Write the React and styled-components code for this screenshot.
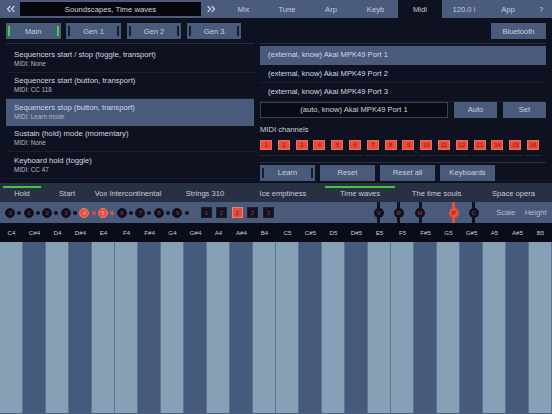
import React from 'react';
import styled, { createGlobalStyle } from 'styled-components';

const GlobalStyle = createGlobalStyle`
  html, body {
    margin: 0;
    padding: 0;
    background: #0e1220;
  }
  body {
    font-family: "Liberation Sans", Arial, sans-serif;
  }
  * {
    box-sizing: border-box;
  }
`;

const TABS = [
  { label: 'Mix', w: 43 },
  { label: 'Tune', w: 44 },
  { label: 'Arp', w: 44 },
  { label: 'Keyb', w: 45 },
  { label: 'Midi', w: 44, active: true },
  { label: '120.0 i', w: 44 },
  { label: 'App', w: 44 },
  { label: '?', w: 22 },
];

const CONTROLS = [
  { title: 'Sequencers start / stop (toggle, transport)', midi: 'MIDI: None' },
  { title: 'Sequencers start (button, transport)', midi: 'MIDI: CC 118' },
  { title: 'Sequencers stop (button, transport)', midi: 'MIDI: Learn mode', selected: true },
  { title: 'Sustain (hold) mode (momentary)', midi: 'MIDI: None' },
  { title: 'Keyboard hold (toggle)', midi: 'MIDI: CC 47' },
];

const PORTS = [
  { name: '(external, know) Akai MPK49 Port 1', selected: true },
  { name: '(external, know) Akai MPK49 Port 2' },
  { name: '(external, know) Akai MPK49 Port 3' },
];

const PRESETS = [
  { label: 'Hold', w: 44, active: true },
  { label: 'Start', w: 46 },
  { label: 'Vox Intercontinental', w: 76 },
  { label: 'Strings 310', w: 78 },
  { label: 'Ice emptiness', w: 78 },
  { label: 'Time waves', w: 76, active: true },
  { label: 'The time souls', w: 77 },
  { label: 'Space opera', w: 77 },
];

const STEPS = ['1', "1'", '2', "2'", '3'];

const KNOBS = [
  { label: 'V', gap: 100 },
  { label: 'R', gap: 10 },
  { label: 'M', gap: 11 },
  { label: 'P', gap: 24, on: true },
  { label: 'C', gap: 10 },
];

const NAMES = ['C', 'C#', 'D', 'D#', 'E', 'F', 'F#', 'G', 'G#', 'A', 'A#', 'B'];
const NOTES = [4, 5].flatMap((oct) => NAMES.map((n) => n + oct));
const SHARP = [1, 3, 6, 8, 10];

const Chevrons = ({ dir }) => (
  <svg width="9" height="8" viewBox="0 0 9 8">
    <g fill="none" stroke="#c9d0de" strokeWidth="1.3" strokeLinecap="round" strokeLinejoin="round">
      {dir === 'left' ? (
        <>
          <polyline points="4,1.5 1.5,4 4,6.5" />
          <polyline points="8,1.5 5.5,4 8,6.5" />
        </>
      ) : (
        <>
          <polyline points="1,1.5 3.5,4 1,6.5" />
          <polyline points="5,1.5 7.5,4 5,6.5" />
        </>
      )}
    </g>
  </svg>
);

const App = () => {
  return (
    <>
      <GlobalStyle />
      <Screen>
        <TopBar>
          <ArrowCell $w={20}><Chevrons dir="left" /></ArrowCell>
          <TitleBox>Soundscapes, Time waves</TitleBox>
          <ArrowCell $w={21}><Chevrons dir="right" /></ArrowCell>
          {TABS.map((t) => (
            <Tab key={t.label} $w={t.w} $active={t.active}>{t.label}</Tab>
          ))}
        </TopBar>

        <Panels>
          <LeftPanel>
            <ButtonRow>
              <PadButton $w={54.5} $bar="#3fd23a">
                <Bar /><span>Main</span><Bar />
              </PadButton>
              {['Gen 1', 'Gen 2', 'Gen 3'].map((g) => (
                <PadButton key={g} $w={54.5} $bar="#161d33">
                  <Bar /><span>{g}</span><Bar />
                </PadButton>
              ))}
            </ButtonRow>
            <Divider />
            <List>
              {CONTROLS.map((c) => (
                <ControlItem key={c.title} $selected={c.selected}>
                  <ItemTitle>{c.title}</ItemTitle>
                  <ItemSub>{c.midi}</ItemSub>
                </ControlItem>
              ))}
            </List>
          </LeftPanel>

          <RightPanel>
            <ButtonRow $end>
              <PadButton $w={55} $plain>Bluetooth</PadButton>
            </ButtonRow>
            <Divider />
            <List>
              {PORTS.map((p) => (
                <PortItem key={p.name} $selected={p.selected}>{p.name}</PortItem>
              ))}
            </List>
            <ButtonRow $gap={6}>
              <PortInput>(auto, know) Akai MPK49 Port 1</PortInput>
              <PadButton $w={43} $plain>Auto</PadButton>
              <PadButton $w={43} $plain>Set</PadButton>
            </ButtonRow>
            <SectionLabel>MIDI channels</SectionLabel>
            <Channels>
              {Array.from({ length: 16 }, (_, i) => (
                <ChannelCell key={i}>
                  <ChannelBox>{i + 1}</ChannelBox>
                  <ChannelLine />
                </ChannelCell>
              ))}
            </Channels>
            <Divider $top={6} />
            <ButtonRow $gap={5} $top={2}>
              <PadButton $w={55} $bar="#161d33">
                <Bar /><span>Learn</span><Bar />
              </PadButton>
              <PadButton $w={55} $plain>Reset</PadButton>
              <PadButton $w={55} $plain>Reset all</PadButton>
              <PadButton $w={55} $plain>Keyboards</PadButton>
            </ButtonRow>
          </RightPanel>
        </Panels>

        <PresetBar>
          {PRESETS.map((p) => (
            <PresetTab key={p.label} $w={p.w}>
              <PresetMark $active={p.active} />
              <PresetLabel>{p.label}</PresetLabel>
            </PresetTab>
          ))}
        </PresetBar>

        <ControlRow>
          <Chain>
            {Array.from({ length: 10 }, (_, i) => (
              <React.Fragment key={i}>
                <Bead $on={i === 4 || i === 5}>{i}</Bead>
                <Link $on={i === 4 || i === 5} />
              </React.Fragment>
            ))}
          </Chain>
          <Steps>
            {STEPS.map((s) => (
              <Step key={s} $on={s === '2'}>{s}</Step>
            ))}
          </Steps>
          {KNOBS.map((k) => (
            <Knob key={k.label} $gap={k.gap} $on={k.on}>
              <KnobHead $on={k.on}>{k.label}</KnobHead>
            </Knob>
          ))}
          <RowLabel $gap={17.5}>Scale</RowLabel>
          <RowLabel $gap={9.5}>Height</RowLabel>
        </ControlRow>

        <NoteRow>
          {NOTES.map((n) => (
            <NoteName key={n}>{n}</NoteName>
          ))}
        </NoteRow>

        <Keys>
          {NOTES.map((n, i) => (
            <Key key={n} $sharp={SHARP.includes(i % 12)} />
          ))}
        </Keys>
      </Screen>
    </>
  );
};

export default App;

const Screen = styled.div`
  width: 552px;
  height: 414px;
  display: flex;
  flex-direction: column;
  overflow: hidden;
  background: #0e1220;
  color: #c9d0dc;
  font-size: 7.6px;
`;

const TopBar = styled.div`
  height: 18px;
  flex: none;
  display: flex;
  background: #4b5b7c;
`;

const ArrowCell = styled.div`
  width: ${({ $w }) => $w}px;
  display: flex;
  align-items: center;
  justify-content: center;
`;

const TitleBox = styled.div`
  width: 181px;
  margin: 2px 0;
  display: flex;
  align-items: center;
  justify-content: center;
  background: #05070f;
  color: #cdd3de;
  font-size: 7.7px;
`;

const Tab = styled.div`
  width: ${({ $w }) => $w}px;
  display: flex;
  align-items: center;
  justify-content: center;
  background: ${({ $active }) => ($active ? '#0e1220' : 'transparent')};
  color: #c4ccdb;
`;

const Panels = styled.div`
  height: 165px;
  flex: none;
  display: flex;
  gap: 6px;
  padding: 5px 6px 0;
`;

const LeftPanel = styled.div`
  width: 248px;
  display: flex;
  flex-direction: column;
`;

const RightPanel = styled.div`
  width: 286px;
  display: flex;
  flex-direction: column;
`;

const ButtonRow = styled.div`
  height: 16px;
  flex: none;
  display: flex;
  gap: ${({ $gap }) => ($gap ?? 5.8)}px;
  margin-top: ${({ $top }) => $top || 0}px;
  justify-content: ${({ $end }) => ($end ? 'flex-end' : 'flex-start')};
`;

const PadButton = styled.div`
  width: ${({ $w }) => $w}px;
  height: 16px;
  display: flex;
  align-items: center;
  justify-content: ${({ $plain }) => ($plain ? 'center' : 'space-between')};
  padding: 0 2px;
  background: #4a5a7b;
  color: #c9d0dc;
  --bar: ${({ $bar }) => $bar || 'transparent'};
`;

const Bar = styled.i`
  width: 2px;
  height: 10px;
  background: var(--bar);
`;

const Divider = styled.div`
  height: 1px;
  flex: none;
  background: #272f43;
  margin-top: ${({ $top }) => ($top ?? 4)}px;
  margin-bottom: ${({ $top }) => ($top ? 0 : 2)}px;
`;

const List = styled.div`
  display: flex;
  flex-direction: column;
`;

const ControlItem = styled.div`
  height: 26.6px;
  padding: 3.5px 8px 0;
  background: ${({ $selected }) => ($selected ? '#4a5a7b' : 'transparent')};
  border-bottom: 1px solid ${({ $selected }) => ($selected ? '#4a5a7b' : '#1a2031')};
`;

const ItemTitle = styled.div`
  font-size: 7.7px;
  line-height: 10px;
  color: #d3d8e1;
  white-space: nowrap;
`;

const ItemSub = styled.div`
  font-size: 6.3px;
  line-height: 8px;
  color: #b3b9c6;
`;

const PortItem = styled.div`
  height: 18.5px;
  display: flex;
  align-items: center;
  padding-left: 8px;
  font-size: 7.6px;
  color: #d3d8e1;
  background: ${({ $selected }) => ($selected ? '#4a5a7b' : 'transparent')};
  border-bottom: 1px solid ${({ $selected }) => ($selected ? '#4a5a7b' : '#1a2031')};
`;

const PortInput = styled.div`
  width: 188px;
  display: flex;
  align-items: center;
  justify-content: center;
  border: 1px solid #384157;
  background: #080b15;
  color: #cfd5df;
`;

const SectionLabel = styled.div`
  margin-top: 7px;
  line-height: 10px;
  color: #c9d0dc;
`;

const Channels = styled.div`
  margin-top: 5px;
  display: grid;
  grid-template-columns: repeat(16, 12px);
  column-gap: 5.8px;
`;

const ChannelCell = styled.div`
  display: flex;
  flex-direction: column;
`;

const ChannelBox = styled.div`
  height: 10px;
  display: flex;
  align-items: center;
  justify-content: center;
  background: #ea4c3a;
  border: 1px solid #f26b58;
  color: #74150b;
  font-size: 5.8px;
`;

const ChannelLine = styled.div`
  height: 1px;
  margin: 5px -2px 0;
  background: #20273a;
`;

const PresetBar = styled.div`
  height: 19px;
  flex: none;
  display: flex;
  background: #283044;
`;

const PresetTab = styled.div`
  width: ${({ $w }) => $w}px;
  display: flex;
  flex-direction: column;
  padding-top: 3px;
`;

const PresetMark = styled.div`
  height: 2px;
  margin: 0 3px;
  background: ${({ $active }) => ($active ? '#3fc73b' : 'transparent')};
`;

const PresetLabel = styled.div`
  line-height: 12px;
  text-align: center;
  white-space: nowrap;
  color: #c4cbd8;
`;

const ControlRow = styled.div`
  height: 21px;
  flex: none;
  display: flex;
  align-items: center;
  padding-left: 5px;
  background: #4a5a7b;
`;

const Chain = styled.div`
  display: flex;
  align-items: center;
  gap: 2.3px;
`;

const Bead = styled.div`
  width: 10px;
  height: 10px;
  border-radius: 50%;
  display: flex;
  align-items: center;
  justify-content: center;
  font-size: 5.8px;
  background: ${({ $on }) => ($on ? '#ec4d3b' : '#0d1120')};
  border: 1px solid ${({ $on }) => ($on ? '#ff7a66' : '#0d1120')};
  color: ${({ $on }) => ($on ? '#ffc2b6' : '#b8352e')};
`;

const Link = styled.div`
  width: 4px;
  height: 4px;
  border-radius: 50%;
  background: ${({ $on }) => ($on ? '#ec4d3b' : '#0d1120')};
`;

const Steps = styled.div`
  display: flex;
  gap: 4.5px;
  margin-left: 12px;
`;

const Step = styled.div`
  width: 11px;
  height: 11px;
  display: flex;
  align-items: center;
  justify-content: center;
  font-size: 6px;
  background: ${({ $on }) => ($on ? '#ec4d3b' : '#0f1322')};
  border: 1px solid ${({ $on }) => ($on ? '#ff7a66' : '#1a1f30')};
  color: ${({ $on }) => ($on ? '#6e1309' : '#b8352e')};
`;

const Knob = styled.div`
  align-self: stretch;
  width: 10px;
  margin-left: ${({ $gap }) => $gap}px;
  display: flex;
  align-items: center;
  justify-content: center;
  background: linear-gradient(
    to right,
    transparent 3.5px,
    ${({ $on }) => ($on ? '#ec4d3b' : '#0d1120')} 3.5px,
    ${({ $on }) => ($on ? '#ec4d3b' : '#0d1120')} 6.5px,
    transparent 6.5px
  );
`;

const KnobHead = styled.div`
  width: 10px;
  height: 10px;
  border-radius: 50%;
  display: flex;
  align-items: center;
  justify-content: center;
  font-size: 5.8px;
  background: ${({ $on }) => ($on ? '#ec4d3b' : '#0d1120')};
  color: ${({ $on }) => ($on ? '#6e1309' : '#c2332c')};
`;

const RowLabel = styled.div`
  margin-left: ${({ $gap }) => $gap}px;
  color: #b5c0d3;
  white-space: nowrap;
`;

const NoteRow = styled.div`
  height: 19px;
  flex: none;
  display: grid;
  grid-template-columns: repeat(24, 23px);
  background: #0a0d19;
`;

const NoteName = styled.div`
  display: flex;
  align-items: center;
  justify-content: center;
  font-size: 6.2px;
  color: #c3cad6;
`;

const Keys = styled.div`
  flex: 1;
  display: grid;
  grid-template-columns: repeat(24, 23px);
  border-bottom: 1px solid #4b5d80;
`;

const Key = styled.div`
  background: ${({ $sharp }) => ($sharp ? '#465a7c' : '#86a0b5')};
  border-right: 1px solid #5c7293;
`;
